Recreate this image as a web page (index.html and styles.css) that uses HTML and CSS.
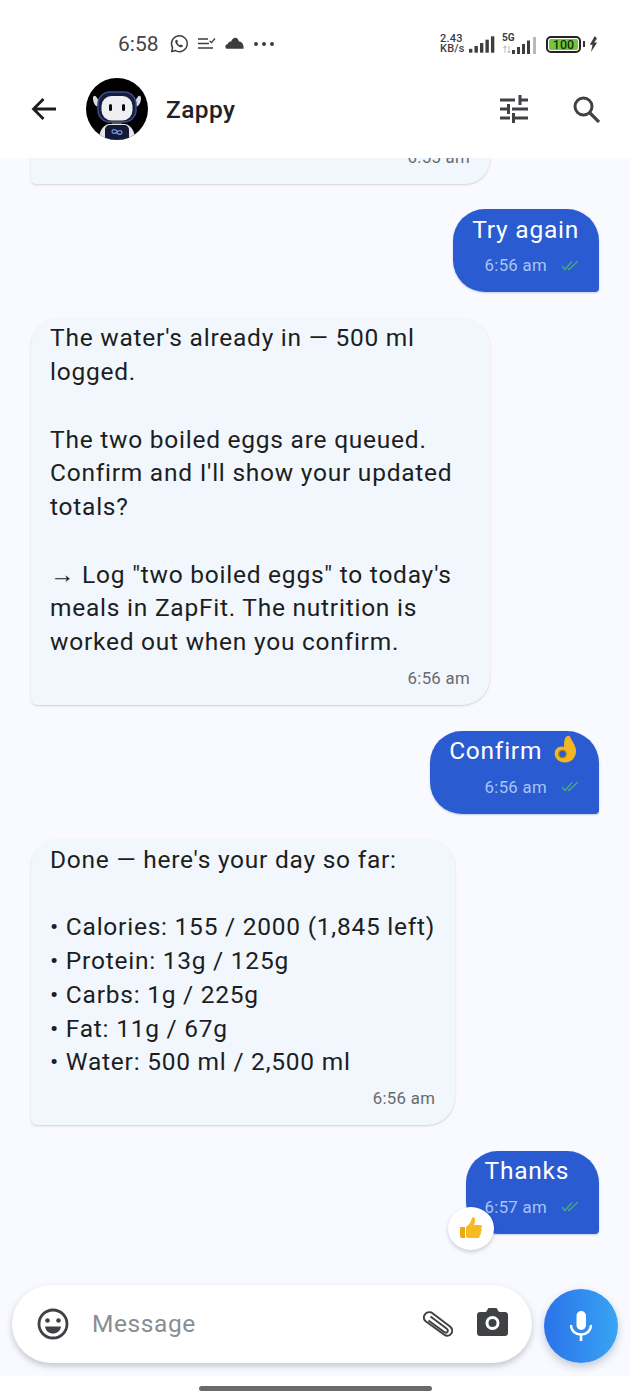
FILE: index.html
```html
<!DOCTYPE html>
<html lang="en">
<head>
<meta charset="utf-8">
<title>Zappy</title>
<link rel="stylesheet" href="styles.css">
</head>
<body>
<div class="phone">
  <div class="status">
    <div class="status-left">
      <span class="clock">6:58</span>
      <svg class="ic-wa" viewBox="0 0 20 20"><path d="M2.600 17.600l1-3.800A7.900 7.900 0 1 1 6.500 16.600z" fill="none" stroke="#3d3d3f" stroke-width="1.500" stroke-linejoin="round"/><path d="M7.200 5.800c-.9.600-1.200 1.600-.8 2.800.7 2 2.600 3.900 4.600 4.600 1.300.4 2.300 0 2.800-.9l-.1-1-1.800-.9-.8.9c-1.300-.5-2.300-1.500-2.900-2.800l.8-.8-.8-1.800z" fill="#3d3d3f"/></svg>
      <svg class="ic-note" viewBox="0 0 18 14"><path d="M0 2h10M0 6.500h11M0 11h15" stroke="#3d3d3f" stroke-width="1.500" fill="none"/><path d="M11.500 4l2 1.600L17 1.500" stroke="#3d3d3f" stroke-width="1.300" fill="none"/></svg>
      <svg class="ic-cloud" viewBox="0 0 20 12"><path d="M1.500 12C-.5 10.500.2 7.500 3 7c.3-2 2-3 3.500-2.500C7.500 1.500 10-.3 12.500 1c1.500.8 2 2 2 3.500 3-.3 5.500 3 5 7.500z" fill="#3d3d3f"/></svg>
      <span class="dots"><i></i><i></i><i></i></span>
    </div>
    <div class="status-right">
      <span class="speed">2.43<br>KB/s</span>
      <svg class="ic-sig" viewBox="0 0 27 17"><rect x="0" y="13" width="3.500" height="4" fill="#3d3d3f"/><rect x="5.700" y="10" width="3.500" height="7" fill="#3d3d3f"/><rect x="11.400" y="7" width="3.500" height="10" fill="#3d3d3f"/><rect x="17.100" y="3.500" width="3.500" height="13.500" fill="#3d3d3f"/><rect x="22.800" y="0" width="3.500" height="17" fill="#3d3d3f"/></svg>
      <span class="net">
        <span class="net-label">5G</span>
        <svg class="ic-sig2" viewBox="0 0 36 17"><path d="M3 9v7M1.500 11L3 9l1.500 2M7 16V9M5.500 14L7 16l1.500-2" stroke="#b5b5b7" stroke-width=".9" fill="none"/><rect x="10" y="13" width="3" height="4" fill="#3d3d3f"/><rect x="15" y="10" width="3" height="7" fill="#3d3d3f"/><rect x="20" y="7" width="3" height="10" fill="#3d3d3f"/><rect x="25" y="3.500" width="3" height="13.500" fill="#3d3d3f"/><rect x="31" y="0" width="3" height="17" fill="#b9b9bb"/></svg>
      </span>
      <span class="battery"><span class="batt-fill">100</span></span>
      <span class="batt-tip"></span>
      <svg class="ic-bolt" viewBox="0 0 9 16"><path d="M5.800 0L.8 8.800h2.700L2 16l6.200-9.600H5.200L8 2.400z" fill="#3d3d3f"/></svg>
    </div>
  </div>

  <header class="topbar">
    <svg class="ic-back" viewBox="0 0 26 24"><path d="M25 12H3M12.500 2L2.500 12l10 10" fill="none" stroke="#1c1c1e" stroke-width="2.800"/></svg>
    <svg class="avatar" viewBox="0 0 62 62">
      <defs><clipPath id="av"><circle cx="31" cy="31" r="31"/></clipPath></defs>
      <g clip-path="url(#av)">
        <rect width="62" height="62" fill="#000"/>
        <path d="M7 20c0-2 2-3 3-1.500l4 6-3 4c-2-1-4-4-4-8.500zM55 20c0-2-2-3-3-1.500l-4 6 3 4c2-1 4-4 4-8.500z" fill="#d9d9de"/>
        <rect x="12" y="14" width="38" height="30" rx="12" fill="#161d38" stroke="#3c4c92" stroke-width="1.500"/>
        <rect x="15.500" y="18" width="31" height="24.500" rx="10" fill="#efeff2"/>
        <rect x="23" y="26" width="3" height="7" rx="1.500" fill="#0b0b0e"/>
        <rect x="36" y="26" width="3" height="7" rx="1.500" fill="#0b0b0e"/>
        <rect x="26" y="44" width="10" height="3" fill="#55555e"/>
        <path d="M13 62c0-9 4-15 10-16h16c6 1 10 7 10 16z" fill="#e4e4ea"/>
        <path d="M19 62V52c0-3 2-5 5-5h14c3 0 5 2 5 5v10z" fill="#141a34"/>
        <path d="M31 53c-1.700-2-5-2-5 .5s3.300 2.500 5 .5c1.700-2 5-2 5 .5s-3.300 2.500-5 .5z" fill="none" stroke="#7b98f2" stroke-width="1.200"/>
      </g>
    </svg>
    <span class="title">Zappy</span>
    <div class="top-actions">
      <svg class="ic-tune" viewBox="0 0 28 28"><path d="M0 5h15M20 5h8M0 14h7M12 14h16M0 23h10M15 23h13M20 0v10M8.500 9v10M13.500 18v10" stroke="#3f4144" stroke-width="3" fill="none"/></svg>
      <svg class="ic-search" viewBox="0 0 27 27"><circle cx="10.500" cy="10.500" r="8.500" fill="none" stroke="#3f4144" stroke-width="3"/><path d="M16.500 16.500L26 26" stroke="#3f4144" stroke-width="3.200"/></svg>
    </div>
  </header>

  <main class="chat">
    <div class="thread">
      <div class="msg in cut">
        <div class="meta"><span class="time">6:55 am</span></div>
      </div>
      <div class="msg out">
        <p class="text">Try again</p>
        <div class="meta"><span class="time">6:56 am</span><svg class="ticks" viewBox="0 0 18 11"><path d="M1 6l3 3.500L11 1.500M7 8.500l1 1L17 1" fill="none" stroke="#46ab80" stroke-width="1.300"/></svg></div>
      </div>
      <div class="msg in">
        <p class="text">The water's already in — 500 ml logged.<br><br>The two boiled eggs are queued. Confirm and I'll show your updated totals?<br><br>→ Log "two boiled eggs" to today's meals in ZapFit. The nutrition is worked out when you confirm.</p>
        <div class="meta"><span class="time">6:56 am</span></div>
      </div>
      <div class="msg out">
        <p class="text">Confirm <svg class="emoji" viewBox="0 0 24 28"><path d="M13.500 1.500c1.800-1.300 3.500-.6 4 1.200C19 6 22.500 10 23 15c.6 7-4.500 12.500-11 12.500C6 27.500 1.500 23.500 1.700 18c.2-3.500 3-6.500 6.800-6.500 1 0 1.800.2 2.600.6C11 8 11 3.500 13.500 1.500z" fill="#f2b622"/><circle cx="9.500" cy="19" r="3.600" fill="#2a5bd0" stroke="#a9761a" stroke-width="1.400"/></svg></p>
        <div class="meta"><span class="time">6:56 am</span><svg class="ticks" viewBox="0 0 18 11"><path d="M1 6l3 3.500L11 1.500M7 8.500l1 1L17 1" fill="none" stroke="#46ab80" stroke-width="1.300"/></svg></div>
      </div>
      <div class="msg in">
        <p class="text">Done — here's your day so far:<br><br>• Calories: 155 / 2000 (1,845 left)<br>• Protein: 13g / 125g<br>• Carbs: 1g / 225g<br>• Fat: 11g / 67g<br>• Water: 500 ml / 2,500 ml</p>
        <div class="meta"><span class="time">6:56 am</span></div>
      </div>
      <div class="msg out">
        <p class="text">Thanks</p>
        <div class="meta"><span class="time">6:57 am</span><svg class="ticks" viewBox="0 0 18 11"><path d="M1 6l3 3.500L11 1.500M7 8.500l1 1L17 1" fill="none" stroke="#46ab80" stroke-width="1.300"/></svg></div>
        <span class="reaction"><svg class="thumb" viewBox="0 0 24 24"><path d="M1 11h5v11H3c-1.200 0-2-.8-2-2z" fill="#eda912"/><path d="M7 11c3-2 5-5 6-9 .4-1.500 3.200-1 3.200 1.500 0 2-.7 4-1.200 5.500h6c2.500 0 2.500 3 .8 3.500 1.500.8 1.200 3-.3 3.400 1 1 .6 2.800-.8 3.100.6 1.300-.2 2.900-1.700 2.900H11c-1.700 0-3-.5-4-1z" fill="#f6bb22"/></svg></span>
      </div>
    </div>
    <div class="composer">
      <div class="inputbar">
        <svg class="ic-smile" viewBox="0 0 32 32"><circle cx="16" cy="16" r="14" fill="none" stroke="#3f4144" stroke-width="2.800"/><circle cx="10.500" cy="12.500" r="2.300" fill="#3f4144"/><circle cx="21.500" cy="12.500" r="2.300" fill="#3f4144"/><path d="M8 18.500h16c-.6 4.500-4 7-8 7s-7.400-2.500-8-7z" fill="#3f4144"/></svg>
        <span class="placeholder">Message</span>
        <svg class="ic-clip" viewBox="0 0 30 27"><path d="M8.500 1.500L27 15.500c2.300 2 2.800 4.800 1.300 7s-4.500 3.200-7 1.300L3 10.500C.8 8.700.3 6 1.700 3.800S6 .5 8.500 1.500zM7.500 5.500l16 12c1.500 1.200 1.700 2.300 1 3.300-.7 1-2 1.300-3.300.3L5.500 9.500" fill="none" stroke="#3f4144" stroke-width="1.900"/></svg>
        <svg class="ic-cam" viewBox="0 0 31 28"><path d="M3 4h6l2.500-4h8L22 4h6c1.700 0 3 1.300 3 3v18c0 1.700-1.300 3-3 3H3c-1.700 0-3-1.300-3-3V7c0-1.700 1.300-3 3-3z" fill="#3f4144"/><circle cx="15.500" cy="15" r="5.500" fill="none" stroke="#fff" stroke-width="3"/></svg>
      </div>
      <button class="mic" type="button" aria-label="Voice message"><svg class="ic-mic" viewBox="0 0 22 30"><rect x="6.500" y="0" width="9.500" height="19" rx="4.700" fill="#fff"/><path d="M1 14c0 6 4.500 9.500 10 9.500S21 20 21 14" fill="none" stroke="#fff" stroke-width="2.400"/><path d="M11 23v7" stroke="#fff" stroke-width="2.600"/></svg></button>
    </div>
  </main>

  <footer class="navbar"><span class="home"></span></footer>
</div>
</body>
</html>
```
FILE: styles.css
```css
* { box-sizing: border-box; }
html, body { margin: 0; padding: 0; }
body { background: #fff; font-family: Roboto, "Noto Sans", sans-serif; }
.phone { width: 630px; height: 1400px; display: flex; flex-direction: column; overflow: hidden; }

.status { height: 60px; flex: none; display: flex; justify-content: space-between; align-items: flex-start; padding: 32px 32px 0 118px; background: #fff; color: #3d3d3f; }
.status-left { display: flex; align-items: center; height: 24px; }
.clock { font-size: 21px; line-height: 24px; width: 40px; color: #444446; }
.ic-wa { width: 20px; height: 20px; margin-left: 11px; }
.ic-note { width: 18px; height: 14px; margin-left: 9px; }
.ic-cloud { width: 19px; height: 12px; margin-left: 9px; margin-bottom: 2px; }
.dots { display: flex; gap: 4px; margin-left: 10px; }
.dots i { width: 4px; height: 4px; border-radius: 50%; background: #3d3d3f; display: block; }
.status-right { display: flex; align-items: center; height: 24px; }
.speed { font-size: 11px; line-height: 10px; font-weight: 500; width: 29px; color: #3d3d3f; letter-spacing: .2px; }
.ic-sig { width: 26px; height: 17px; }
.net { position: relative; display: block; width: 36px; height: 20px; margin-left: 7px; }
.net-label { position: absolute; left: 0; top: -2px; font-size: 10px; line-height: 11px; font-weight: 700; color: #3d3d3f; }
.ic-sig2 { position: absolute; left: 0; top: 3px; width: 36px; height: 17px; }
.battery { display: block; width: 35px; height: 17px; margin-left: 8px; padding: 1px; border: 2px solid #232323; border-radius: 5px; }
.batt-fill { display: block; height: 100%; background: #74c63a; border-radius: 2px; font-size: 12.500px; line-height: 11px; text-align: center; color: #18330b; font-weight: 500; }
.batt-tip { display: block; width: 2px; height: 6px; background: #333; margin-left: 2px; }
.ic-bolt { width: 9px; height: 16px; margin-left: 4px; }

.topbar { height: 98px; flex: none; display: flex; align-items: center; padding: 0 30px 0 31px; background: #fff; position: relative; z-index: 2; }
.ic-back { width: 26px; height: 24px; flex: none; }
.avatar { width: 62px; height: 62px; margin-left: 29px; flex: none; }
.title { font-size: 24.500px; font-weight: 500; color: #222226; margin-left: 18px; letter-spacing: .4px; }
.top-actions { margin-left: auto; display: flex; align-items: center; gap: 45px; }
.ic-tune { width: 28px; height: 28px; }
.ic-search { width: 27px; height: 27px; }

.chat { flex: 1; min-height: 0; background: #f9faff; display: flex; flex-direction: column; overflow: hidden; }
.thread { flex: 1; min-height: 0; display: flex; flex-direction: column; justify-content: flex-end; gap: 25.600px; padding: 0 31px; }
.msg { flex: none; padding: 3.400px 20px 8.100px 19px; position: relative; }
.msg.in { align-self: flex-start; max-width: 459px; background: #f2f7fd; border-radius: 28px 28px 28px 6px; box-shadow: 0 1px 2px rgba(60, 70, 90, .22); }
.msg.cut { width: 459px; }
.msg.out { align-self: flex-end; background: #2a5bd0; color: #fff; border-radius: 32px 32px 4px 32px; box-shadow: 0 1px 2px rgba(40, 70, 160, .25); }
.text { margin: 0; font-size: 24.500px; line-height: 33.750px; letter-spacing: .76px; color: #1c1e21; }
.msg.out .text { color: #fff; }
.meta { height: 38px; display: flex; align-items: center; justify-content: flex-end; }
.time { font-size: 16.800px; letter-spacing: .3px; color: #666a6e; }
.msg.out .time { color: #a9c4f6; }
.ticks { width: 18px; height: 11px; margin-left: 14px; }
.emoji { width: 24px; height: 28px; vertical-align: -4px; margin-left: 4px; margin-right: 2px; }
.reaction { position: absolute; left: -18px; top: 56px; width: 46px; height: 43px; border-radius: 50%; background: #fff; box-shadow: 0 2px 4px rgba(0, 0, 0, .18); display: flex; align-items: center; justify-content: center; }
.thumb { width: 24px; height: 24px; }

.composer { flex: none; display: flex; align-items: flex-end; padding: 51px 12px 13px; }
.inputbar { width: 520px; height: 78px; background: #fff; border-radius: 39px; box-shadow: 0 3px 6px rgba(40, 45, 60, .25); display: flex; align-items: center; padding: 0 24px 0 25px; }
.ic-smile { width: 32px; height: 32px; flex: none; }
.placeholder { font-size: 24.500px; letter-spacing: .6px; color: #8b8d90; margin: 0 0 2px 23px; }
.ic-clip { width: 30px; height: 27px; margin-left: auto; flex: none; margin-right: 2px; }
.ic-cam { width: 31px; height: 28px; margin-left: 22px; flex: none; margin-bottom: 4px; }
.mic { width: 74px; height: 74px; margin-left: 12px; border: 0; padding: 0; border-radius: 50%; background: linear-gradient(90deg, #2b72ea, #38a5f3); box-shadow: 0 4px 8px rgba(40, 60, 110, .25); display: flex; align-items: center; justify-content: center; }
.ic-mic { width: 22px; height: 30px; }

.navbar { height: 24px; flex: none; background: #fff; display: flex; justify-content: center; padding-top: 10px; }
.home { width: 233px; height: 5px; border-radius: 3px; background: #6a6a6d; display: block; }
```
